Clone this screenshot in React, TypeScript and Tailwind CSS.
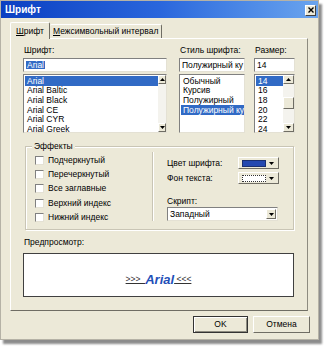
const fonts = ['Arial', 'Arial Baltic', 'Arial Black', 'Arial CE', 'Arial CYR', 'Arial Greek']
const styles = ['Обычный', 'Курсив', 'Полужирный', 'Полужирный курсив']
const sizes = ['14', '16', '18', '20', '22', '24']
const effects = ['Подчеркнутый', 'Перечеркнутый', 'Все заглавные', 'Верхний индекс', 'Нижний индекс']

const sunken = 'border border-t-[#808080] border-l-[#808080] border-b-[#e4e1d4] border-r-[#e4e1d4] bg-white'
const raised = 'border border-t-white border-l-white border-b-[#6f6d64] border-r-[#6f6d64] bg-[#ece9d8]'

function Arrow({ up }: { up?: boolean }) {
  return (
    <svg width="5" height="3" viewBox="0 0 5 3">
      <path d={up ? 'M0 3 L2.5 0 L5 3 Z' : 'M0 0 L5 0 L2.5 3 Z'} fill="#000" />
    </svg>
  )
}

function ScrollBar({ w, thumb }: { w: string; thumb?: boolean }) {
  return (
    <div className={`${w} h-full flex flex-col bg-[#f4f3ee]`}>
      <div className={`h-[9px] flex items-center justify-center ${raised}`}>
        <Arrow up />
      </div>
      <div className="flex-1 flex flex-col">
        {thumb && <div className={`mt-[13px] h-[12px] ${raised}`} />}
      </div>
      <div className={`h-[9px] flex items-center justify-center ${raised}`}>
        <Arrow />
      </div>
    </div>
  )
}

function ListBox({ items, selected, width, scroll }: { items: string[]; selected: number; width: string; scroll: React.ReactNode }) {
  return (
    <div className={`${width} h-[59px] mt-[2px] flex ${sunken} overflow-hidden`}>
      <div className="flex-1 min-w-0 pt-[1px] pl-[1px]">
        {items.map((t, i) => (
          <div
            key={t}
            className={`h-[9.7px] flex items-center pl-[2px] whitespace-nowrap overflow-hidden ${
              i === selected ? 'bg-[#316ac5] text-white' : ''
            }`}
          >
            {t}
          </div>
        ))}
      </div>
      {scroll}
    </div>
  )
}

function Column({ label, value, width, children, hl }: { label: string; value: string; width: string; children: React.ReactNode; hl?: boolean }) {
  return (
    <div className={`${width} flex flex-col`}>
      <div className="h-[13px] flex items-center pl-[1px]">{label}</div>
      <div className={`h-[14px] mt-[1px] flex items-center pl-[2px] whitespace-nowrap overflow-hidden ${sunken}`}>
        {hl ? <span className="bg-[#316ac5] text-white px-[1px]">{value}</span> : value}
      </div>
      {children}
    </div>
  )
}

function ColorButton({ blue }: { blue?: boolean }) {
  return (
    <div className={`w-[41px] h-[12px] flex items-center pl-[3px] pr-[3px] gap-[3px] ${raised}`}>
      <div
        className={`w-[24px] h-[7px] ${
          blue ? 'bg-[#2448b0] border border-[#1a2f70]' : 'bg-white border border-dotted border-[#333]'
        }`}
      />
      <Arrow />
    </div>
  )
}

export default function App() {
  return (
    <div className="w-[330px] h-[350px] bg-white font-['Liberation_Sans',Arial,sans-serif] text-[8.5px] text-black leading-none">
      <div className="w-[319px] h-[340px] bg-[#ece9d8] border border-[#b5b2a6] shadow-[3px_4px_2px_rgba(0,0,0,0.45)] flex flex-col">
        {/* title bar */}
        <div className="h-[17px] bg-gradient-to-r from-[#0b3fc2] via-[#2a66dc] to-[#6aa4ee] flex items-center justify-between pl-[4px] pr-[2px]">
          <span className="text-white font-bold text-[10px]">Шрифт</span>
          <div className="w-[11px] h-[11px] mt-[1px] bg-[#ece9d8] border border-t-white border-l-white border-b-[#404040] border-r-[#404040] flex items-center justify-center">
            <svg width="6" height="6" viewBox="0 0 6 6">
              <path d="M0.5 0.5 L5.5 5.5 M5.5 0.5 L0.5 5.5" stroke="#000" strokeWidth="1.4" />
            </svg>
          </div>
        </div>

        <div className="pl-[9px] pt-[4px]">
          {/* tabs */}
          <div className="h-[16px] flex items-end">
            <div className="relative z-10 h-[17px] -mb-[1px] px-[5px] flex items-center border border-b-0 border-t-white border-l-white border-r-[#6f6d64] rounded-t-[2px] bg-[#ece9d8]">
              <span><u>Ш</u>рифт</span>
            </div>
            <div className="h-[14px] px-[3px] flex items-center border border-b-0 border-t-white border-l-0 border-r-[#6f6d64] rounded-t-[2px] bg-[#ece9d8]">
              <span><u>М</u>ежсимвольный интервал</span>
            </div>
          </div>

          {/* panel */}
          <div className="w-[298px] h-[273px] border border-t-white border-l-white border-b-[#6f6d64] border-r-[#8d8b80] pl-[12px] pt-[5px] flex flex-col">
            <div className="flex">
              <Column label="Шрифт:" value="Arial" width="w-[144px]" hl>
                <ListBox items={fonts} selected={0} width="w-[144px]" scroll={<ScrollBar w="w-[8px]" />} />
              </Column>
              <div className="w-[12px]" />
              <Column label="Стиль шрифта:" value="Полужирный ку" width="w-[66px]">
                <ListBox items={styles} selected={3} width="w-[66px]" scroll={null} />
              </Column>
              <div className="w-[9px]" />
              <Column label="Размер:" value="14" width="w-[41px]">
                <ListBox items={sizes} selected={0} width="w-[41px]" scroll={<ScrollBar w="w-[11px]" thumb />} />
              </Column>
            </div>

            {/* effects group */}
            <div className="relative mt-[13px] ml-[2px] w-[269px] h-[84px] border border-[#c9c5b5] shadow-[inset_1px_1px_0_#fff,1px_1px_0_#fff] flex">
              <span className="absolute -top-[5px] left-[6px] px-[2px] bg-[#ece9d8]">Эффекты</span>
              <div className="w-[126px] pl-[9px] pt-[6px] flex flex-col">
                {effects.map((e) => (
                  <div key={e} className="h-[14.3px] flex items-center gap-[4px]">
                    <div className="w-[9px] h-[9px] border border-t-[#808080] border-l-[#808080] border-b-[#e4e1d4] border-r-[#e4e1d4] bg-white" />
                    <span>{e}</span>
                  </div>
                ))}
              </div>
              <div className="mt-[5px] h-[69px] w-[2px] border-l border-[#c9c5b5] border-r border-r-white" />
              <div className="ml-[13px] w-[112px] pt-[10px] flex flex-col">
                <div className="flex items-center justify-between">
                  <span>Цвет шрифта:</span>
                  <ColorButton blue />
                </div>
                <div className="mt-[3px] flex items-center justify-between">
                  <span>Фон текста:</span>
                  <ColorButton />
                </div>
                <div className="mt-[12px] h-[10px] flex items-center">Скрипт:</div>
                <div className={`mt-[1px] h-[14px] w-[111px] flex items-center justify-between pl-[2px] pr-[1px] ${sunken}`}>
                  <span>Западный</span>
                  <div className={`w-[10px] h-[10px] flex items-center justify-center ${raised}`}>
                    <Arrow />
                  </div>
                </div>
              </div>
            </div>

            {/* preview */}
            <div className="mt-[7px] h-[10px] flex items-center pl-[1px]">Предпросмотр:</div>
            <div className="mt-[6px] w-[271px] h-[44px] bg-white border border-[#404040] flex items-center justify-center pt-[8px]">
              <span className="underline text-[#333] whitespace-pre">{'>>>  '}</span>
              <span className="font-bold italic text-[13px] text-[#1f4fb8]">Arial</span>
              <span className="underline text-[#333] whitespace-pre">{' <<<'}</span>
            </div>
          </div>
        </div>

        {/* buttons */}
        <div className="mt-[5px] flex justify-end gap-[5px] pr-[8px]">
          <div className="w-[55px] h-[17px] border border-[#333] shadow-[inset_1px_1px_0_#fff,inset_-1px_-1px_0_#8d8b80] bg-[#ece9d8] flex items-center justify-center">
            OK
          </div>
          <div className={`w-[57px] h-[17px] flex items-center justify-center ${raised}`}>Отмена</div>
        </div>
      </div>
    </div>
  )
}
